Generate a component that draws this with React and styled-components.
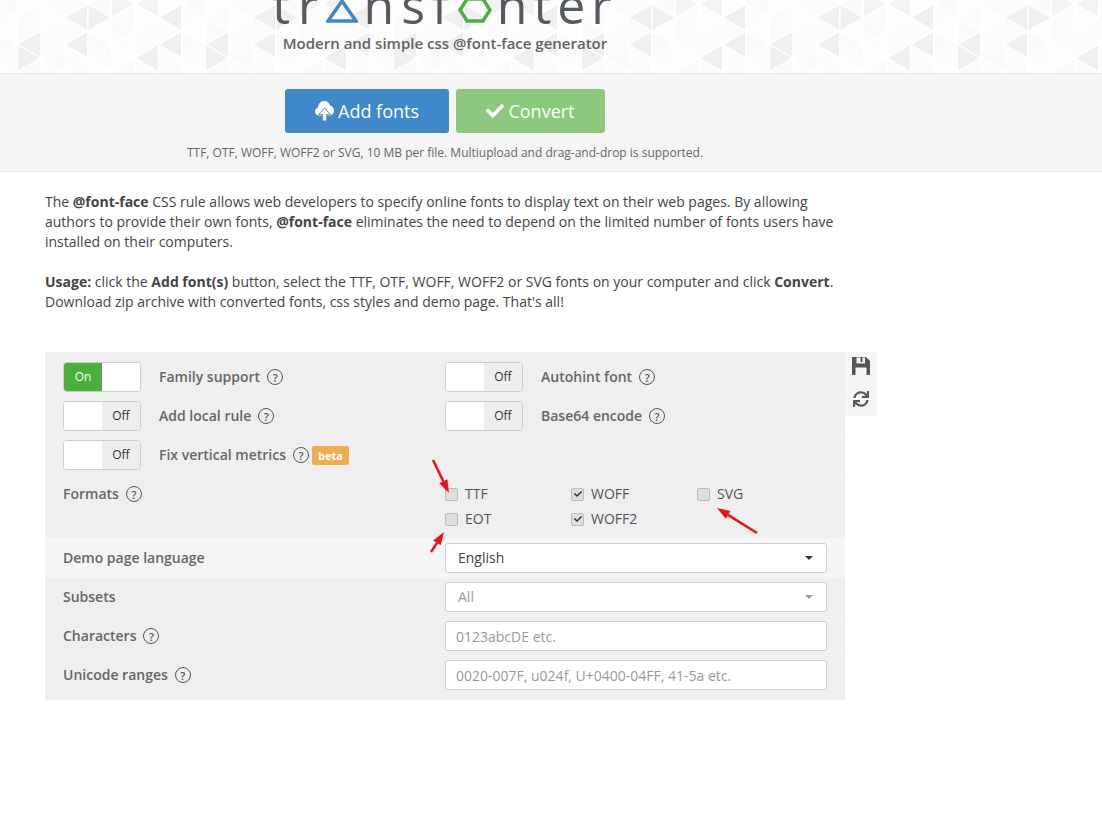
import React from "react";
import styled, { createGlobalStyle } from "styled-components";
import { FaCheck, FaSync } from "react-icons/fa";

const textColor = "#444";
const labelColor = "#666";
const borderColor = "#ccc";

const GlobalStyle = createGlobalStyle`
  body {
    margin: 0;
    background: #fff;
    color: ${textColor};
    font-family: "Open Sans", "Liberation Sans", sans-serif;
    font-size: 14px;
    line-height: 20px;
  }
`;

const Page = styled.div`
  position: relative;
  width: 1102px;
  height: 817px;
  overflow: hidden;
`;

const Header = styled.header`
  position: relative;
  height: 73px;
  overflow: hidden;
  border-bottom: 1px solid #e6e6e6;
`;

const HeaderArt = styled.svg`
  position: absolute;
  top: 0;
  left: 0;
`;

const HeaderInner = styled.div`
  position: relative;
  width: 890px;
  display: flex;
  flex-direction: column;
  align-items: center;
`;

const Logo = styled.div`
  height: 24px;
  display: flex;
  align-items: flex-end;
  color: #555a60;
`;

const LogoText = styled.span`
  font-size: 50px;
  font-weight: 400;
  line-height: 1;
  letter-spacing: ${p => p.$spacing}px;
  margin-bottom: -6px;
  white-space: nowrap;
`;

const LogoShape = styled.svg`
  flex: none;
  margin: 0 ${p => p.$right}px 1px ${p => p.$left}px;
`;

const Tagline = styled.div`
  margin-top: 8px;
  font-size: 15px;
  font-weight: 600;
  line-height: 22px;
  color: #636363;
`;

const Toolbar = styled.section`
  width: 890px;
  padding: 15px 0 8px;
  display: flex;
  flex-direction: column;
  align-items: center;
  gap: 10px;
`;

const ToolbarBand = styled.div`
  background: #f5f5f5;
  border-bottom: 1px solid #e6e6e6;
`;

const Buttons = styled.div`
  display: flex;
  gap: 7px;
`;

const Button = styled.button`
  width: ${p => p.$width}px;
  height: 44px;
  border: 0;
  border-radius: 3px;
  background: ${p => p.$bg};
  color: #fff;
  font-family: inherit;
  font-size: 18px;
  display: flex;
  align-items: center;
  justify-content: center;
  gap: 4px;
`;

const Hint = styled.div`
  font-size: 12px;
  line-height: 20px;
  color: #666;
`;

const Content = styled.main`
  width: 800px;
  padding: 20px 45px 0;
`;

const Para = styled.p`
  margin: 0 0 20px;
`;

const SettingsWrap = styled.div`
  display: flex;
  align-items: flex-start;
  width: 832px;
  margin-top: 40px;
`;

const Panel = styled.div`
  width: 800px;
  flex: none;
  background: #efefef;
`;

const Row = styled.div`
  display: flex;
  align-items: ${p => (p.$top ? "flex-start" : "center")};
  height: ${p => p.$height || 38}px;
  box-sizing: content-box;
  padding-top: ${p => p.$pad || 0}px;
  padding-bottom: ${p => p.$padBottom || 0}px;
  border-bottom: ${p => (p.$last ? "0" : "1px solid #f4f4f4")};
  background: ${p => (p.$active ? "#f5f5f5" : "transparent")};
`;

const Cell = styled.div`
  width: 400px;
  flex: none;
  box-sizing: border-box;
  padding-left: 18px;
  padding-top: ${p => p.$top || 0}px;
  display: flex;
  align-items: center;
`;

const FlushCell = styled(Cell)`
  padding-left: 0;
`;

const ControlCell = styled.div`
  width: 382px;
  flex: none;
`;

const ToggleBox = styled.div`
  width: 78px;
  height: 30px;
  box-sizing: border-box;
  border: 1px solid ${borderColor};
  border-radius: 4px;
  overflow: hidden;
  display: flex;
  margin-right: 18px;
  background: #fff;
`;

const ToggleSide = styled.div`
  width: 38px;
  display: flex;
  align-items: center;
  justify-content: center;
  font-size: 12px;
  background: ${p => p.$bg};
  color: ${p => p.$color};
`;

const Label = styled.span`
  font-weight: 600;
  color: ${labelColor};
`;

const Help = styled.span`
  width: 14px;
  height: 14px;
  margin-left: 7px;
  border: 1.5px solid #555;
  border-radius: 50%;
  display: inline-flex;
  align-items: center;
  justify-content: center;
  font-size: 11px;
  font-weight: 600;
  line-height: 1;
  color: #555;
`;

const Badge = styled.span`
  margin-left: 3px;
  width: 37px;
  height: 19px;
  border-radius: 2px;
  background: #f0ad4e;
  color: #fff;
  font-size: 11px;
  font-weight: 700;
  line-height: 19px;
  text-align: center;
`;

const FormatGrid = styled.div`
  display: grid;
  grid-template-columns: repeat(3, 126px);
  grid-auto-rows: 25px;
  padding-top: 9px;
`;

const Format = styled.div`
  display: flex;
  align-items: center;
  gap: 7px;
  height: 20px;
  color: #555;
  font-size: 14px;
`;

const CheckBox = styled.span`
  width: 11px;
  height: 11px;
  border: 1px solid #bbb;
  border-radius: 2px;
  background: #dedede;
  display: flex;
  align-items: center;
  justify-content: center;
  color: #333;
  font-size: 8px;
`;

const Select = styled.div`
  height: 30px;
  box-sizing: border-box;
  border: 1px solid ${borderColor};
  border-radius: 3px;
  background: #fff;
  padding: 0 13px 0 12px;
  display: flex;
  align-items: center;
  justify-content: space-between;
  color: ${p => (p.$disabled ? "#999" : "#444")};
`;

const Caret = styled.span`
  width: 0;
  height: 0;
  border-left: 4px solid transparent;
  border-right: 4px solid transparent;
  border-top: 4px solid ${p => (p.$disabled ? "#999" : "#333")};
`;

const TextInput = styled.input`
  display: block;
  width: 100%;
  height: 30px;
  box-sizing: border-box;
  border: 1px solid ${borderColor};
  border-radius: 3px;
  padding: 0 10px;
  font-family: inherit;
  font-size: 14px;
  &::placeholder {
    color: #999;
    opacity: 1;
  }
`;

const SideTools = styled.div`
  width: 32px;
  height: 64px;
  background: #f5f5f5;
  color: #5a5a5a;
  display: flex;
  flex-direction: column;
  align-items: center;
  gap: 16px;
  padding-top: 5px;
  box-sizing: border-box;
  font-size: 16px;
`;

const Arrows = styled.svg`
  position: absolute;
  top: 0;
  left: 0;
  pointer-events: none;
`;

// triangle lattice behind the logo, repeats every 8 columns
const darkCells = ["L3:4", "L3:31", "L1:31", "L7:4", "L7:31", "L6:44.5", "R3:4", "R0:44.5"];
const midCells = ["R4:-9.5", "L6:-9.5"];

const cellFill = (dir, col, y) => {
  const key = `${dir}${col}:${y}`;
  if (darkCells.includes(key)) return "#efefef";
  if (midCells.includes(key)) return "#f3f3f3";
  const n = Math.abs(col * 7 + Math.round(y) * 3 + (dir === "L" ? 5 : 0)) % 4;
  return ["#fbfbfb", "#fcfcfc", "#fafafa", "#fdfdfd"][n];
};

const buildLattice = () => {
  const cells = [];
  const colW = 23.5;
  for (let i = -1; i < 48; i++) {
    const col = ((i % 8) + 8) % 8;
    const x = 17.5 + i * colW;
    const start = col % 2 === 1 ? 4 : 17.5;
    for (let y = start - 27; y < 80; y += 27) {
      cells.push({
        key: `L${i}:${y}`,
        fill: cellFill("L", col, y),
        points: `${x},${y} ${x},${y + 27} ${x - colW},${y + 13.5}`,
      });
      cells.push({
        key: `R${i}:${y}`,
        fill: cellFill("R", col, y),
        points: `${x},${y} ${x},${y + 27} ${x + colW},${y + 13.5}`,
      });
    }
  }
  return cells;
};

const lattice = buildLattice();

const Lattice = () => (
  <HeaderArt width="1102" height="73">
    {lattice.map(c => (
      <polygon key={c.key} points={c.points} fill={c.fill} stroke="#fff" strokeWidth="1.2" />
    ))}
  </HeaderArt>
);

const CloudUp = () => (
  <svg width="19" height="20" viewBox="0 0 19 20">
    <path
      d="M4 14.5C1.800 14.500 0 12.800 0 10.500 0 8.500 1.300 7 3 6.500 3.200 2.900 5.800 0 9.200 0c2.700 0 5 1.800 5.800 4.400C17.300 4.800 19 6.900 19 9.600c0 2.700-2 4.900-4.500 4.900z"
      fill="#fff"
    />
    <path
      d="M9.500 7.500L14.500 13H11.200V19.500H7.800V13H4.500z"
      fill="#fff"
      stroke="#3f88c9"
      strokeWidth="1.4"
      paintOrder="stroke"
    />
  </svg>
);

const Floppy = () => (
  <svg width="18" height="18" viewBox="0 0 18 18">
    <path
      fillRule="evenodd"
      fill="#555"
      d="M1 0H14L18 4V17a1 1 0 0 1-1 1H1a1 1 0 0 1-1-1V1a1 1 0 0 1 1-1zM4.500 0.500V6.500H13V0.500H10.500V5H8.500V0.500zM3.500 10.500V18H14.500V10.500z"
    />
  </svg>
);

const Toggle = ({ on }) => (
  <ToggleBox>
    {on ? (
      <>
        <ToggleSide $bg="#4cae3c" $color="#fff">On</ToggleSide>
        <ToggleSide $bg="#fff" />
      </>
    ) : (
      <>
        <ToggleSide $bg="#fff" />
        <ToggleSide $bg="#eee" $color="#333">Off</ToggleSide>
      </>
    )}
  </ToggleBox>
);

const Check = ({ on, children }) => (
  <Format>
    <CheckBox>{on && <FaCheck />}</CheckBox>
    {children}
  </Format>
);

const RedArrow = ({ x1, y1, x2, y2 }) => {
  const a = Math.atan2(y2 - y1, x2 - x1);
  const len = 13;
  const wing = 4.5;
  const bx = x2 - Math.cos(a) * len;
  const by = y2 - Math.sin(a) * len;
  const px = -Math.sin(a) * wing;
  const py = Math.cos(a) * wing;
  return (
    <>
      <line x1={x1} y1={y1} x2={bx} y2={by} stroke="#e8141c" strokeWidth="2.6" />
      <polygon points={`${x2},${y2} ${bx + px},${by + py} ${bx - px},${by - py}`} fill="#e8141c" />
    </>
  );
};

export default () => {
  return (
    <Page>
      <GlobalStyle />
      <Header>
        <Lattice />
        <HeaderInner>
          <Logo>
            <LogoText $spacing={8}>tr</LogoText>
            <LogoShape $left={0} $right={5} width="32" height="24" viewBox="0 0 32 24">
              <polygon points="16,2 30,22 2,22" fill="none" stroke="#3f87c7" strokeWidth="3.5" />
            </LogoShape>
            <LogoText $spacing={7}>nsf</LogoText>
            <LogoShape $left={2} $right={5} width="34" height="24" viewBox="0 0 34 24">
              <polygon points="9,0 25,0 32,11 25,22 9,22 2,11" fill="none" stroke="#4cae3c" strokeWidth="3.5" />
            </LogoShape>
            <LogoText $spacing={6}>nter</LogoText>
          </Logo>
          <Tagline>Modern and simple css @font-face generator</Tagline>
        </HeaderInner>
      </Header>
      <ToolbarBand>
        <Toolbar>
          <Buttons>
            <Button $width={164} $bg="#3f88c9"><CloudUp /> Add fonts</Button>
            <Button $width={149} $bg="#8cc97e"><FaCheck /> Convert</Button>
          </Buttons>
          <Hint>TTF, OTF, WOFF, WOFF2 or SVG, 10 MB per file. Multiupload and drag-and-drop is supported.</Hint>
        </Toolbar>
      </ToolbarBand>
      <Content>
        <Para>
          The <b>@font-face</b> CSS rule allows web developers to specify online fonts to display text on their web pages. By allowing authors to provide their own fonts, <b>@font-face</b> eliminates the need to depend on the limited number of fonts users have installed on their computers.
        </Para>
        <Para>
          <b>Usage:</b> click the <b>Add font(s)</b> button, select the TTF, OTF, WOFF, WOFF2 or SVG fonts on your computer and click <b>Convert</b>. Download zip archive with converted fonts, css styles and demo page. That's all!
        </Para>
        <SettingsWrap>
          <Panel>
            <Row $pad={6}>
              <Cell><Toggle on /><Label>Family support</Label><Help>?</Help></Cell>
              <FlushCell><Toggle /><Label>Autohint font</Label><Help>?</Help></FlushCell>
            </Row>
            <Row>
              <Cell><Toggle /><Label>Add local rule</Label><Help>?</Help></Cell>
              <FlushCell><Toggle /><Label>Base64 encode</Label><Help>?</Help></FlushCell>
            </Row>
            <Row>
              <Cell><Toggle /><Label>Fix vertical metrics</Label><Help>?</Help><Badge>beta</Badge></Cell>
            </Row>
            <Row $top $height={63}>
              <Cell $top={9}><Label>Formats</Label><Help>?</Help></Cell>
              <FormatGrid>
                <Check>TTF</Check>
                <Check on>WOFF</Check>
                <Check>SVG</Check>
                <Check>EOT</Check>
                <Check on>WOFF2</Check>
              </FormatGrid>
            </Row>
            <Row $active>
              <Cell><Label>Demo page language</Label></Cell>
              <ControlCell><Select>English<Caret /></Select></ControlCell>
            </Row>
            <Row>
              <Cell><Label>Subsets</Label></Cell>
              <ControlCell><Select $disabled>All<Caret $disabled /></Select></ControlCell>
            </Row>
            <Row>
              <Cell><Label>Characters</Label><Help>?</Help></Cell>
              <ControlCell><TextInput placeholder="0123abcDE etc." /></ControlCell>
            </Row>
            <Row $last $padBottom={6}>
              <Cell><Label>Unicode ranges</Label><Help>?</Help></Cell>
              <ControlCell><TextInput placeholder="0020-007F, u024f, U+0400-04FF, 41-5a etc." /></ControlCell>
            </Row>
          </Panel>
          <SideTools>
            <Floppy />
            <FaSync />
          </SideTools>
        </SettingsWrap>
      </Content>
      <Arrows width="1102" height="817">
        <RedArrow x1={433} y1={460} x2={449} y2={493} />
        <RedArrow x1={431} y1={552} x2={444} y2={532} />
        <RedArrow x1={757} y1={533} x2={717} y2={508} />
      </Arrows>
    </Page>
  );
};
